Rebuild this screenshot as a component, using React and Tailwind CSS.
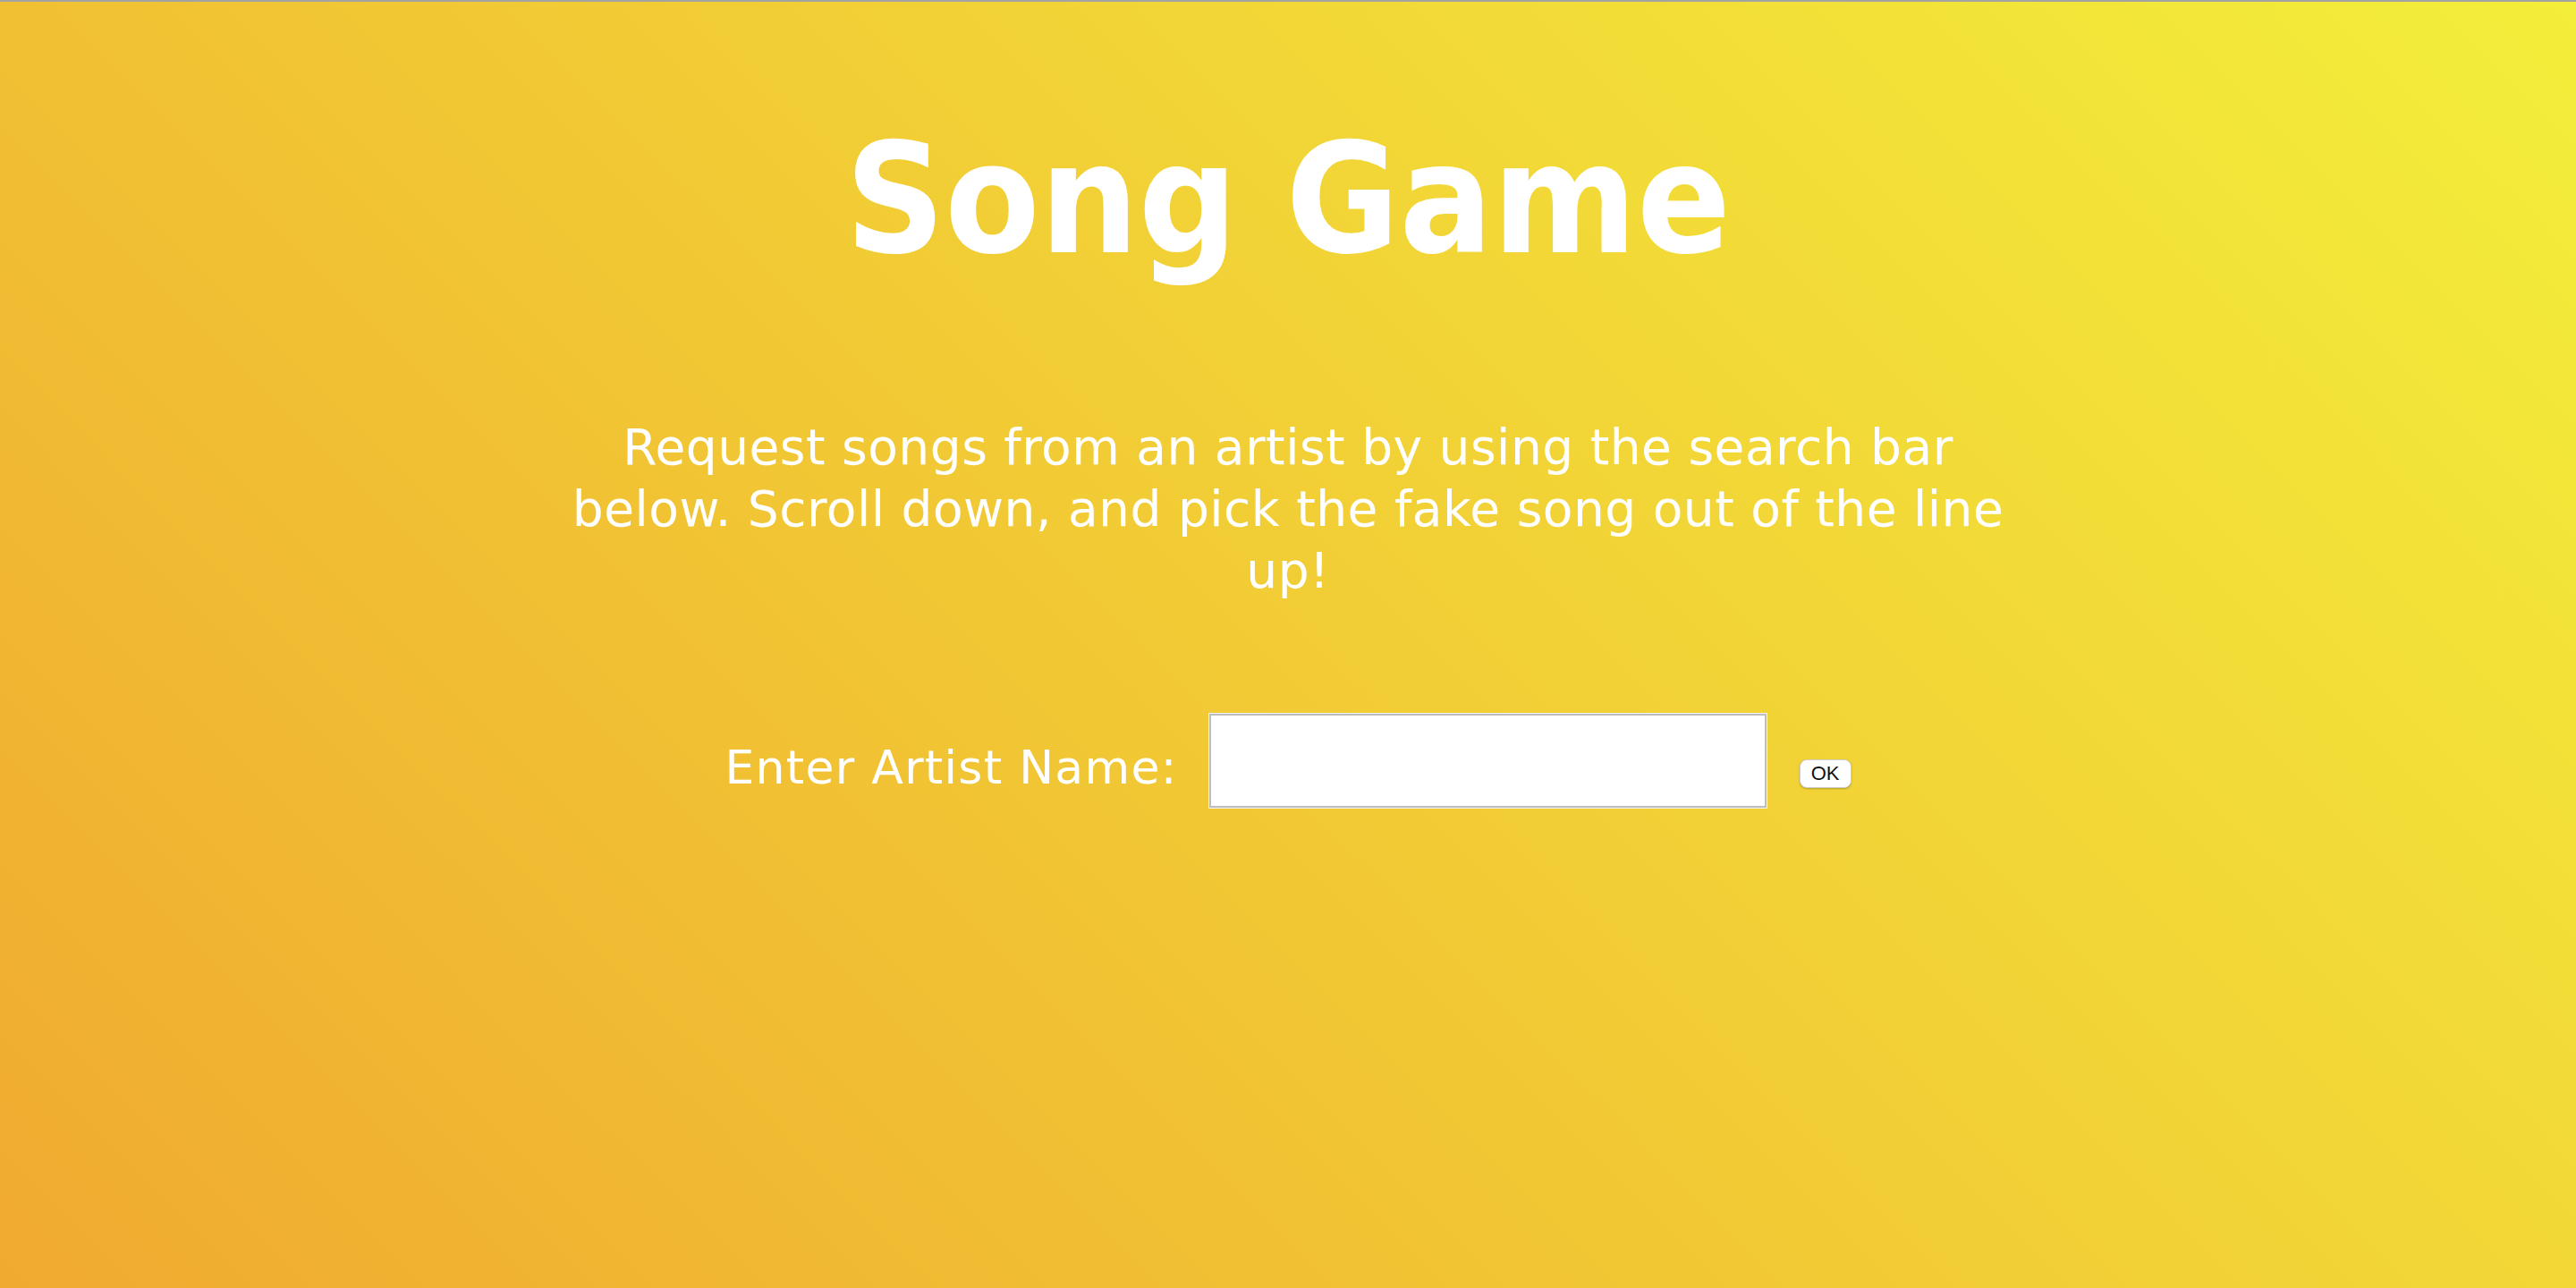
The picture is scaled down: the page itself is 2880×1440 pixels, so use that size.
import React from "react";

export default function App() {
  return (
    <div className="h-[1440px] w-full overflow-hidden border-t-2 border-[#a3a3a3] bg-[linear-gradient(45deg,#f0aa30,#f3ee3a)] flex flex-col items-center text-white font-['DejaVu_Sans',sans-serif]">
      <h1 className="mt-[135px] text-[172px] leading-none font-bold font-['DejaVu_Sans_Condensed','DejaVu_Sans',sans-serif] font-stretch-condensed whitespace-nowrap">
        Song Game
      </h1>
      <p className="mt-[157px] w-[1640px] text-center text-[55px] leading-[69px] tracking-[0.5px]">
        Request songs from an artist by using the search bar below. Scroll down, and pick the fake song out of the line up!
      </p>
      <div className="mt-[125px] flex items-start">
        <label className="mt-[34px] text-[52px] leading-none tracking-[1.3px] whitespace-nowrap">
          Enter Artist Name:
        </label>
        <input
          type="text"
          className="ml-[35px] w-[623px] h-[105px] bg-white border-2 border-[#bdbdbd] outline-1 outline-[#f4f4f4]"
        />
        <button className="ml-[37px] mt-[51px] w-[58px] h-[32px] rounded-[8px] bg-white border border-[#cfcfcf] shadow-[0_1px_2px_rgba(0,0,0,0.25)] text-[22px] leading-none text-[#111] font-['Liberation_Sans',Arial,sans-serif]">
          OK
        </button>
      </div>
    </div>
  );
}
